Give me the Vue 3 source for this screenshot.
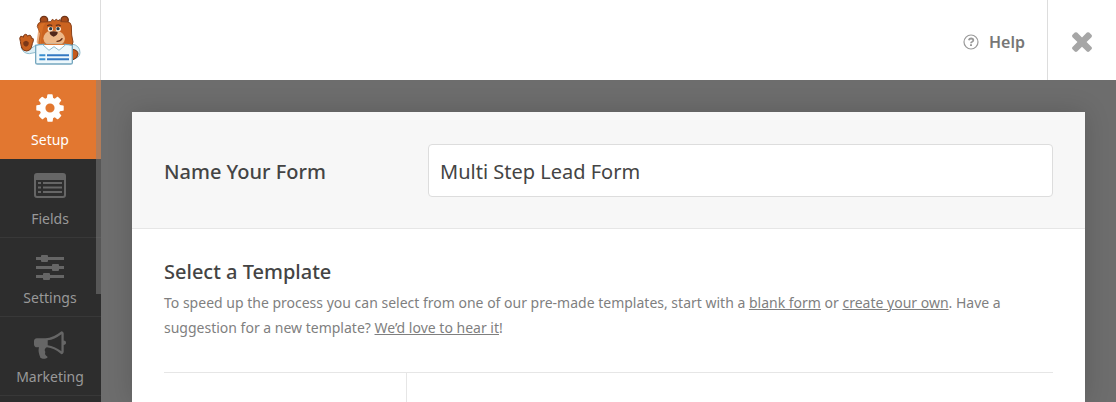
<template>
  <div class="builder">
    <header class="toolbar">
      <a class="logo" href="#" aria-label="Home">
        <svg viewBox="54 42 192 156" width="64" height="52" stroke-linejoin="round" stroke-linecap="round">
          <!-- sleeves -->
          <path d="M64 144q6 17 24 17l20-4v-22l-14 10q-14 8-30-1z" fill="#dceef5" stroke="#8fbccd" stroke-width="3" />
          <path d="M216 132q24 4 24 26 0 16-22 20z" fill="#dceef5" stroke="#8fbccd" stroke-width="3" />
          <path d="M218 148q16 2 16 14 0 12-16 18z" fill="#c45a1c" stroke="#6f3519" stroke-width="3" />
          <!-- waving hand -->
          <path d="M65 143q-3-9-4-19-4-11 1-15 5-1 8 3 0-8 6-9 6 0 7 6 3-5 8-3 4 3 3 9 5-2 6 2 1 6-3 14l-3 12q-3 9-14 10-12 0-15-10z" fill="#c9611f" stroke="#7b3818" stroke-width="3" />
          <path d="M70 127q8-9 16 0 2 10-8 13-10-3-8-13z" fill="#7b3818" />
          <!-- head -->
          <circle cx="132" cy="60" r="11" fill="#a84c1b" stroke="#6f3519" stroke-width="4" />
          <circle cx="194" cy="60" r="11" fill="#a84c1b" stroke="#6f3519" stroke-width="4" />
          <path d="M112 78q1-11 12-12l29-1 4-7 6 4 6-4 5 4 6-3 2 6 21 1q10 1 11 12l1 27 4 21q0 12-12 12h-79q-12 0-11-12l4-24z" fill="#cb6320" stroke="#8a421b" stroke-width="3" />
          <path d="M116 80q3-10 20-11-8 10-10 32l-4 33q-12-1-12-9z" fill="#e0782c" opacity=".6" />
          <path d="M130 116q2-20 20-24h23q20 6 22 24-2 21-32 21-31-1-33-21z" fill="#edb888" />
          <ellipse cx="151" cy="87" rx="8" ry="7" fill="#fff1df" />
          <ellipse cx="175" cy="87" rx="8" ry="7" fill="#fff1df" />
          <circle cx="152" cy="86" r="5" fill="#263c49" />
          <circle cx="174" cy="86" r="5" fill="#263c49" />
          <path d="M143 77q6-4 12-1M169 76q7-3 12 1" fill="none" stroke="#63301a" stroke-width="4" />
          <path d="M149 96q12-5 24 0 1 9-12 14-13-5-12-14z" fill="#51281a" />
          <path d="M171 124q11 0 15-8" fill="none" stroke="#63301a" stroke-width="4" />
          <!-- shirt and form -->
          <path d="M107 136q10-3 22-3l65 0q12 0 23 3v52q0 4-5 4h-100q-5 0-5-4z" fill="#eef8fc" stroke="#75a7bf" stroke-width="4" />
          <path d="M132 132h62l-18 16-14-9-14 9z" fill="#dc7b36" />
          <path d="M129 135l18 16 15-11 15 11 19-16" fill="#fff" stroke="#8fbccd" stroke-width="3" />
          <path d="M118 166h18M118 178h18" stroke="#398ed0" stroke-width="6" stroke-linecap="butt" />
          <path d="M141 166h66M141 178h66" stroke="#3579c2" stroke-width="6" stroke-linecap="butt" />
        </svg>
      </a>
      <button class="help" type="button">
        <svg viewBox="0 0 16 16" width="16" height="16" fill="none" stroke="currentColor">
          <circle cx="8" cy="8" r="7" stroke-width="1.2" />
          <path d="M5.8 6.2q.5-1.7 2.3-1.7 2.2 0 2.2 1.7 0 1-1.1 1.6-1.2.6-1.2 1.500" stroke-width="1.8" />
          <path d="M8 10.3v1.700" stroke-width="2" />
        </svg>
        <span>Help</span>
      </button>
      <button class="close" type="button" aria-label="Close">
        <svg viewBox="0 0 1792 1792" width="30" height="30" fill="currentColor">
          <path d="M1490 1322q0 40-28 68l-136 136q-28 28-68 28t-68-28l-294-294-294 294q-28 28-68 28t-68-28l-136-136q-28-28-28-68t28-68l294-294-294-294q-28-28-28-68t28-68l136-136q28-28 68-28t68 28l294 294 294-294q28-28 68-28t68 28l136 136q28 28 28 68t-28 68l-294 294 294 294q28 28 28 68z" />
        </svg>
      </button>
    </header>

    <div class="workspace">
      <nav class="sidebar">
        <button
          v-for="panel in panels"
          :key="panel.name"
          type="button"
          class="panel-button"
          :class="{ active: panel.name === current }"
          @click="current = panel.name"
        >
          <svg :viewBox="panel.viewBox" width="32" height="32" fill="currentColor" fill-rule="evenodd">
            <path :d="panel.icon" />
          </svg>
          <span>{{ panel.name }}</span>
        </button>
        <div class="scroll-thumb"></div>
      </nav>

      <main class="content">
        <section class="card">
          <div class="name-row">
            <label for="form-name">Name Your Form</label>
            <input id="form-name" v-model="formName" type="text" />
          </div>
          <div class="templates">
            <h2>Select a Template</h2>
            <p>
              To speed up the process you can select from one of our pre-made templates, start with a
              <a href="#">blank form</a> or <a href="#">create your own</a>. Have a suggestion for a new template?
              <a href="#">We’d love to hear it</a>!
            </p>
            <div class="template-list">
              <div class="categories"></div>
            </div>
          </div>
        </section>
      </main>
    </div>
  </div>
</template>

<script setup>
import { ref } from 'vue'

const formName = ref('Multi Step Lead Form')
const current = ref('Setup')

const panels = [
  {
    name: 'Setup',
    viewBox: '0 0 1792 1792',
    icon: 'M1152 896q0-106-75-181t-181-75-181 75-75 181 75 181 181 75 181-75 75-181zm512-109v222q0 12-8 23t-20 13l-185 28q-19 54-39 91 35 50 107 138 10 12 10 25t-9 23q-27 37-99 108t-94 71q-12 0-26-9l-138-108q-44 23-91 38-16 136-29 186-7 28-36 28h-222q-14 0-24.5-8.5t-11.5-21.5l-28-184q-49-16-90-37l-141 107q-10 9-25 9-14 0-25-11-126-114-165-168-7-10-7-23 0-12 8-23 15-21 51-66.5t54-70.5q-27-50-41-99l-183-27q-13-2-21-12.5t-8-23.5v-222q0-12 8-23t19-13l186-28q14-46 39-92-40-57-107-138-10-12-10-24 0-10 9-23 26-36 98.5-107.5t94.5-71.5q13 0 26 10l138 107q44-23 91-38 16-136 29-186 7-28 36-28h222q14 0 24.5 8.5t11.5 21.5l28 184q49 16 90 37l142-107q9-9 24-9 13 0 25 10 129 119 165 170 7 8 7 22 0 12-8 23-15 21-51 66.5t-54 70.5q26 50 41 98l183 28q13 2 21 12.5t8 23.5z'
  },
  {
    name: 'Fields',
    viewBox: '0 1 32 32',
    icon: 'M3 3h26q3 0 3 3v19q0 3-3 3H3q-3 0-3-3V6q0-3 3-3zM2 10v15q0 1 1 1h26q1 0 1-1V10zM4 12h3v2H4zM9 12h19v2H9zM4 16.500h3v2H4zM9 16.500h19v2H9zM4 21h3v2H4zM9 21h19v2H9z'
  },
  {
    name: 'Settings',
    viewBox: '0 0 32 32',
    icon: 'M2 7h5V6q0-1 1-1h5q1 0 1 1v1h16v3H14v1q0 1-1 1H8q-1 0-1-1v-1H2zM2 16h16v-1q0-1 1-1h5q1 0 1 1v1h5v3h-5v1q0 1-1 1h-5q-1 0-1-1v-1H2zM2 25h7v-1q0-1 1-1h5q1 0 1 1v1h14v3H16v1q0 1-1 1h-5q-1 0-1-1v-1H2z'
  },
  {
    name: 'Marketing',
    viewBox: '0 0 1792 1792',
    icon: 'M1664 640q53 0 90.5 37.5t37.5 90.5-37.5 90.5-90.5 37.5v384q0 52-38 90t-90 38q-417-347-812-380-58 19-91 66t-31 100.500 40 92.500q-20 33-23 65.500t6 58 33.500 55 48 50 61.500 50.500q-29 58-111.500 83t-168.500 11.500-132-55.500q-7-23-29.500-87.500t-32-94.500-23-89-15-101 3.500-98.500 22-110.500h-122q-66 0-113-47t-47-113v-192q0-66 47-113t113-47h480q435 0 896-384 52 0 90 38t38 90v384zm-128 604v-954q-394 302-768 343v270q377 42 768 341z'
  }
]
</script>

<style>
body {
  margin: 0;
}
</style>

<style scoped>
.builder {
  display: flex;
  flex-direction: column;
  height: 100vh;
  overflow: hidden;
  background: #6d6d6d;
  font-family: "Segoe UI", "Noto Sans", sans-serif;
}

button {
  border: 0;
  padding: 0;
  background: none;
  font: inherit;
  cursor: pointer;
}

.toolbar {
  display: flex;
  flex: none;
  height: 80px;
  background: #fff;
}

.logo {
  display: flex;
  align-items: center;
  justify-content: center;
  width: 100px;
  border-right: 1px solid #ddd;
}

.help {
  display: flex;
  align-items: center;
  gap: 10px;
  margin-left: auto;
  padding: 4px 22px 0 0;
  color: #777;
  font-size: 16px;
  font-weight: 600;
}

.help svg {
  color: #999;
}

.close {
  display: flex;
  align-items: center;
  justify-content: center;
  width: 69px;
  padding: 2px 0 0;
  border-left: 1px solid #ddd;
  color: #a6a6a6;
}

.workspace {
  display: flex;
  flex: 1;
  min-height: 0;
}

.sidebar {
  position: relative;
  flex: none;
  width: 101px;
  background: #2d2d2d;
  overflow: hidden;
}

.panel-button {
  display: flex;
  flex-direction: column;
  align-items: center;
  gap: 6px;
  width: 100%;
  padding: 12px 1px 8px 0;
  border-bottom: 1px solid #383838;
  color: #666;
  font-size: 14px;
  line-height: 20px;
}

.panel-button span {
  color: #999;
}

.panel-button.active {
  border-color: #e27730;
  background: #e27730;
  color: #fff;
}

.panel-button.active span {
  color: #fff;
}

.scroll-thumb {
  position: absolute;
  top: 0;
  right: 0;
  width: 5px;
  height: 214px;
  background: rgba(130, 130, 130, 0.5);
}

.content {
  flex: 1;
  min-width: 0;
  padding: 32px 31px 0;
}

.card {
  height: 100%;
  background: #fff;
  box-shadow: 0 0 24px rgba(0, 0, 0, 0.16);
}

.name-row {
  display: flex;
  align-items: center;
  padding: 32px 32px 31px;
  border-bottom: 1px solid #e6e6e6;
  background: #f7f7f7;
}

.name-row label {
  flex: none;
  width: 264px;
  padding-top: 2px;
  color: #444;
  font-size: 20px;
  font-weight: 500;
}

.name-row input {
  flex: 1;
  min-width: 0;
  height: 53px;
  box-sizing: border-box;
  padding: 2px 11px 0;
  border: 1px solid #ddd;
  border-radius: 4px;
  background: #fff;
  color: #444;
  font-family: inherit;
  font-size: 20px;
  outline: none;
}

.templates {
  padding: 29px 32px 0;
}

h2 {
  margin: 0 0 4px;
  color: #444;
  font-size: 20px;
  font-weight: 500;
  line-height: 28px;
}

p {
  margin: 0 0 32px;
  color: #7f7f7f;
  font-size: 14px;
  line-height: 25px;
}

p a {
  color: inherit;
}

.template-list {
  display: flex;
  height: 60px;
  border-top: 1px solid #e6e6e6;
}

.categories {
  width: 242px;
  border-right: 1px solid #e6e6e6;
}
</style>
